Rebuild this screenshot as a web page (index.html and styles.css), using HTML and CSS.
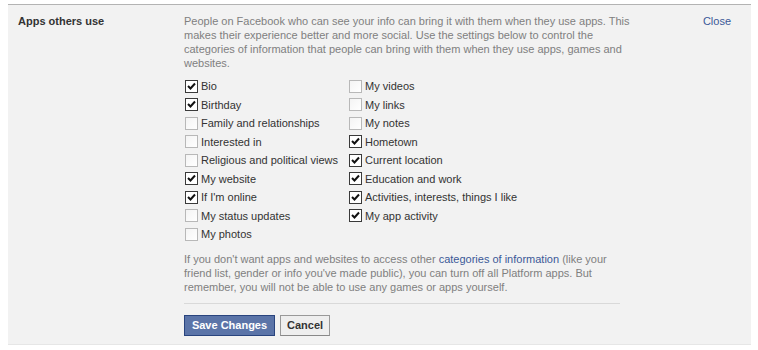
FILE: index.html
```html
<!DOCTYPE html>
<html lang="en">
<head>
  <meta charset="UTF-8" />
  <title>Apps others use</title>
  <link rel="stylesheet" href="styles.css">
</head>
<body>
  <div class="settings-panel">
    <div class="section-title">Apps others use</div>
    <div class="section-body">
      <p class="intro">People on Facebook who can see your info can bring it with them when they use apps. This makes their experience better and more social. Use the settings below to control the categories of information that people can bring with them when they use apps, games and websites.</p>
      <div class="options-grid">
        <label class="option"><span class="box checked"></span>Bio</label>
        <label class="option"><span class="box checked"></span>Birthday</label>
        <label class="option"><span class="box"></span>Family and relationships</label>
        <label class="option"><span class="box"></span>Interested in</label>
        <label class="option"><span class="box"></span>Religious and political views</label>
        <label class="option"><span class="box checked"></span>My website</label>
        <label class="option"><span class="box checked"></span>If I'm online</label>
        <label class="option"><span class="box"></span>My status updates</label>
        <label class="option"><span class="box"></span>My photos</label>
        <label class="option"><span class="box"></span>My videos</label>
        <label class="option"><span class="box"></span>My links</label>
        <label class="option"><span class="box"></span>My notes</label>
        <label class="option"><span class="box checked"></span>Hometown</label>
        <label class="option"><span class="box checked"></span>Current location</label>
        <label class="option"><span class="box checked"></span>Education and work</label>
        <label class="option"><span class="box checked"></span>Activities, interests, things I like</label>
        <label class="option"><span class="box checked"></span>My app activity</label>
      </div>
      <p class="note">If you don't want apps and websites to access other <a href="#">categories of information</a> (like your friend list, gender or info you've made public), you can turn off all Platform apps. But remember, you will not be able to use any games or apps yourself.</p>
      <div class="actions">
        <button class="btn btn-confirm">Save Changes</button>
        <button class="btn btn-cancel">Cancel</button>
      </div>
    </div>
    <a class="close-link" href="#">Close</a>
  </div>
</body>
</html>
```

FILE: styles.css
```css
body {
  margin: 0;
  background: #fff;
  font-family: 'Liberation Sans', Arial, sans-serif;
  font-size: 11px;
  color: #333;
}
.settings-panel {
  margin: 4px 7px 0 8px;
  height: 341px;
  box-sizing: border-box;
  border-top: 1px solid #b3b3b3;
  border-bottom: 1px solid #e6e6e6;
  background-color: #f2f2f2;
  padding: 8px 10px 0 10px;
  display: flex;
}
.section-title {
  width: 166px;
  font-weight: bold;
  line-height: 14px;
  padding-top: 1px;
  color: #333;
}
.section-body {
  width: 458px;
}
.intro, .note {
  margin: 0;
  line-height: 14px;
  color: #808080;
}
.intro {
  padding-top: 1px;
}
.note {
  width: 440px;
}
.note a {
  color: #3b5998;
  text-decoration: none;
}
.options-grid {
  display: grid;
  grid-template-columns: 164px auto;
  grid-template-rows: repeat(9, 18.5px);
  grid-auto-flow: column;
  margin: 7px 0 8px 1px;
}
.option {
  display: flex;
  align-items: center;
  color: #333;
  line-height: 14px;
}
.box {
  width: 11px;
  height: 11px;
  border: 1px solid #b8b8b8;
  background: linear-gradient(135deg, #f4f4f4, #fff);
  margin-right: 3px;
  flex-shrink: 0;
}
.box.checked {
  border-color: #3a3a3a;
  background: #fff url("data:image/svg+xml,%3Csvg xmlns='http://www.w3.org/2000/svg' width='11' height='11'%3E%3Cpath d='M2 5 L4.5 7.5 L9 2.5' fill='none' stroke='%23111' stroke-width='2'/%3E%3C/svg%3E") no-repeat center;
}
.actions {
  width: 436px;
  border-top: 1px solid #d9d9d9;
  margin-top: 9px;
  padding-top: 11px;
  display: flex;
  gap: 5px;
}
.btn {
  font-family: inherit;
  font-size: 11px;
  font-weight: bold;
  height: 21px;
  padding: 0 6px;
  cursor: pointer;
}
.btn-confirm {
  background-color: #5b74a8;
  border: 1px solid #29447e;
  color: #fff;
  width: 91px;
}
.btn-cancel {
  background-color: #eee;
  border: 1px solid #999;
  border-bottom-color: #888;
  color: #333;
  width: 50px;
}
.close-link {
  margin-left: auto;
  margin-right: 10px;
  padding-top: 1px;
  line-height: 14px;
  color: #3b5998;
  text-decoration: none;
  height: 14px;
}
```
